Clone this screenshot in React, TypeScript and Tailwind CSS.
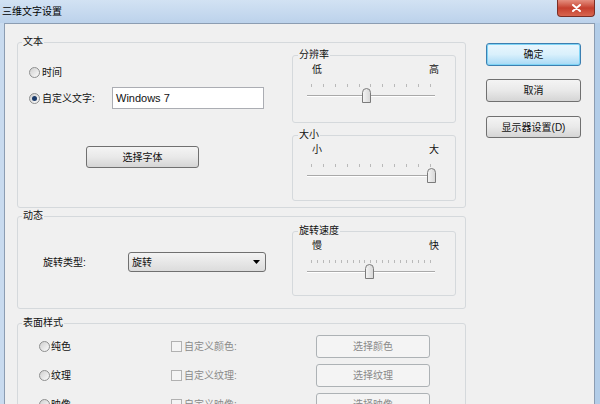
import React from 'react'

const Radio = ({ checked }: { checked?: boolean }) => (
  <span className="flex h-[11px] w-[11px] shrink-0 items-center justify-center rounded-full border border-[#8e8f8f] bg-linear-to-br from-[#d0d0d0] to-[#fbfbfb]">
    {checked && <span className="h-[5px] w-[5px] rounded-full bg-[#1c3c6b]" />}
  </span>
)

const Check = () => (
  <span className="h-[11px] w-[11px] shrink-0 border border-[#b1b1b1] bg-[#f4f4f4]" />
)

function Slider({ pct, ticks }: { pct: number; ticks: number }) {
  return (
    <div className="relative ml-[14px] mt-[7px] flex h-[18px] w-[128px] flex-col">
      <div className="flex justify-between px-[4px]">
        {Array.from({ length: ticks }).map((_, i) => (
          <span key={i} className="h-[3px] w-px bg-[#b9b9b9]" />
        ))}
      </div>
      <div className="mt-[8px] h-[2px] border-t border-b border-t-[#a9a9a9] border-b-white" />
      <svg
        width="9"
        height="15"
        viewBox="0 0 9 15"
        className="absolute top-[4px]"
        style={{ left: `${pct * 120}px` }}
      >
        <defs>
          <linearGradient id="th" x1="0" x2="1" y1="0" y2="0">
            <stop offset="0" stopColor="#f5f5f5" />
            <stop offset="1" stopColor="#d6d6d6" />
          </linearGradient>
        </defs>
        <path d="M0.5 14.5 V4.5 Q0.5 0.5 4.5 0.5 Q8.5 0.5 8.5 4.5 V14.5 Z" fill="url(#th)" stroke="#7b7b7b" />
      </svg>
    </div>
  )
}

function SubGroup({ title, lo, hi, pct, ticks, className }: { title: string; lo: string; hi: string; pct: number; ticks: number; className: string }) {
  return (
    <fieldset className={`w-[164px] rounded-[3px] border border-[#d5d9dc] ${className}`}>
      <legend className="ml-[5px] px-[1px] text-[10px] leading-[14px]">{title}</legend>
      <div className="mt-[1px] flex justify-between pl-[19px] pr-[16px] text-[10px] leading-[14px]">
        <span>{lo}</span>
        <span>{hi}</span>
      </div>
      <Slider pct={pct} ticks={ticks} />
    </fieldset>
  )
}

function Group({ title, className, children }: { title: string; className: string; children: React.ReactNode }) {
  return (
    <fieldset className={`w-[449px] rounded-[3px] border border-[#d5d9dc] ${className}`}>
      <legend className="ml-[4px] px-[1px] text-[10px] leading-[12px]">{title}</legend>
      {children}
    </fieldset>
  )
}

const btn = 'flex items-center justify-center rounded-[3px] border text-[10px]'
const normal = `${btn} border-[#707070] bg-linear-to-b from-[#f4f4f4] via-[#e9e9e9] to-[#d5d5d5]`
const disabled = `${btn} border-[#adb2b5] bg-[#f4f4f4] text-[#8a8a8a]`

export default function App() {
  const surface = [
    ['纯色', '自定义颜色:', '选择颜色'],
    ['纹理', '自定义纹理:', '选择纹理'],
    ['映像', '自定义映像:', '选择映像'],
  ]

  return (
    <div className="flex h-[404px] w-[600px] flex-col overflow-hidden bg-[#bcd3eb] font-['Liberation_Sans','Noto_Sans_CJK_SC',sans-serif] text-[#111]">
      <div className="flex h-[23px] shrink-0 items-start justify-between bg-linear-to-b from-[#d2e2f3] to-[#bcd2eb]">
        <span className="pl-[2px] text-[10px] leading-[23px] text-black">三维文字设置</span>
        <div className="mr-[5px] flex h-[17px] w-[38px] shrink-0 items-center justify-center rounded-b-[4px] border border-t-0 border-[#7a2e25] bg-linear-to-b from-[#e48e7f] via-[#c53f2e] to-[#d8654f]">
          <svg width="9" height="8" viewBox="0 0 9 8">
            <path d="M1 1 L8 7 M8 1 L1 7" stroke="white" strokeWidth="2" strokeLinecap="round" />
          </svg>
        </div>
      </div>

      <div className="flex flex-1">
        <div className="w-[4px] bg-[#c9dbef]" />
        <div className="flex flex-1 items-start border-x border-t border-[#8c9db2] bg-[#f0f0f0]">
          <div className="ml-[12px] mt-[12px] flex flex-col">
            <Group title="文本" className="h-[172px]">
              <div className="flex">
                <div className="flex w-[274px] flex-col pl-[11px]">
                  <div className="mt-[16px] flex h-[16px] items-center text-[10px]">
                    <Radio />
                    <span className="ml-[2px]">时间</span>
                  </div>
                  <div className="mt-[7px] flex h-[22px] items-center text-[10px]">
                    <Radio checked />
                    <span className="ml-[2px] w-[70px]">自定义文字:</span>
                    <div className="flex h-[22px] w-[152px] items-center border border-[#abadb3] bg-white pl-[3px] text-[11px]">
                      Windows 7
                    </div>
                  </div>
                  <div className={`${normal} ml-[57px] mt-[37px] h-[22px] w-[113px]`}>选择字体</div>
                </div>
                <div className="flex flex-col">
                  <SubGroup title="分辨率" lo="低" hi="高" pct={0.46} ticks={11} className="h-[75px]" />
                  <SubGroup title="大小" lo="小" hi="大" pct={1} ticks={11} className="mt-[5px] h-[73px]" />
                </div>
              </div>
            </Group>

            <Group title="动态" className="mt-[2px] h-[99px]">
              <div className="flex">
                <div className="flex w-[274px] pl-[25px]">
                  <div className="mt-[30px] flex h-[20px] items-center text-[10px]">
                    <span className="w-[85px]">旋转类型:</span>
                    <div className="flex h-[20px] w-[138px] items-center justify-between rounded-[3px] border border-[#707070] bg-linear-to-b from-[#f3f3f3] to-[#dcdcdc] pl-[3px] pr-[5px]">
                      <span>旋转</span>
                      <svg width="7" height="4" viewBox="0 0 7 4">
                        <path d="M0 0 H7 L3.5 4 Z" fill="#000" />
                      </svg>
                    </div>
                  </div>
                </div>
                <SubGroup title="旋转速度" lo="慢" hi="快" pct={0.48} ticks={21} className="mt-[2px] h-[72px]" />
              </div>
            </Group>

            <Group title="表面样式" className="mt-[8px] h-[110px]">
              <div className="mt-[6px] flex flex-col gap-[6px] pl-[21px] text-[10px]">
                {surface.map(([r, c, b]) => (
                  <div key={r} className="flex h-[23px] items-center">
                    <div className="flex w-[132px] items-center">
                      <Radio />
                      <span className="ml-[1px]">{r}</span>
                    </div>
                    <div className="flex w-[145px] items-center text-[#8a8a8a]">
                      <Check />
                      <span className="ml-[2px]">{c}</span>
                    </div>
                    <div className={`${disabled} h-[23px] w-[114px]`}>{b}</div>
                  </div>
                ))}
              </div>
            </Group>
          </div>

          <div className="ml-[20px] mt-[19px] flex flex-col">
            <div className={`${btn} h-[23px] w-[95px] border-[#3c7fb1] bg-linear-to-b from-[#eaf6fd] via-[#d9f0fc] to-[#a7d9f5] shadow-[inset_0_0_0_1px_#7fd4f5]`}>确定</div>
            <div className={`${normal} mt-[13px] h-[23px] w-[95px]`}>取消</div>
            <div className={`${normal} mt-[14px] h-[22px] w-[95px]`}>显示器设置(D)</div>
          </div>
        </div>
        <div className="w-[5px] bg-[#b3cde8]" />
      </div>
    </div>
  )
}
